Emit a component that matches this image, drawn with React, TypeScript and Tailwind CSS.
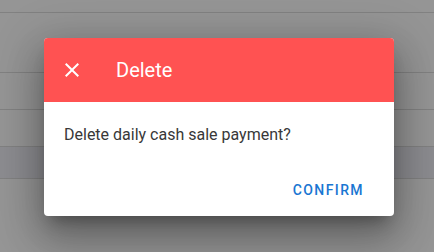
import React from 'react';

const ROWS = [
  { h: 'h-[13px]', bg: '' },
  { h: 'h-[60px]', bg: '' },
  { h: 'h-[37px]', bg: '' },
  { h: 'h-[37px]', bg: '' },
  { h: 'h-[32px]', bg: 'bg-[#8c8c90]' },
];

export default function App() {
  return (
    <div className="relative w-[434px] h-[252px] overflow-hidden bg-[#959595]" style={{ fontFamily: 'Roboto, "Liberation Sans", sans-serif' }}>
      {/* backdrop rows */}
      <div className="flex flex-col">
        {ROWS.map((r, i) => (
          <div key={i} className={`${r.h} ${r.bg} border-b border-[#818181]`} />
        ))}
      </div>

      {/* dialog */}
      <div className="absolute left-[44px] top-[38px] w-[350px] h-[178px] rounded-[4px] overflow-hidden bg-white shadow-[0_11px_15px_-7px_rgba(0,0,0,0.3),0_24px_38px_3px_rgba(0,0,0,0.2),0_9px_46px_8px_rgba(0,0,0,0.18)] flex flex-col">
        <div className="h-16 bg-[#ff5252] flex items-center pl-4 text-white">
          <svg viewBox="0 0 24 24" className="w-6 h-6" fill="currentColor">
            <path d="M19 6.41 17.59 5 12 10.59 6.41 5 5 6.41 10.59 12 5 17.59 6.41 19 12 13.41 17.59 19 19 17.59 13.41 12z" />
          </svg>
          <span className="ml-8 text-[20px] leading-none">Delete</span>
        </div>
        <div className="px-5 pt-[21px] text-[16px] leading-6 text-[#383838]">
          Delete daily cash sale payment?
        </div>
        <div className="mt-auto flex justify-end pr-[22px] pb-2">
          <button className="h-9 px-2 text-[14px] font-medium tracking-[1.4px] text-[#1976d2]">
            CONFIRM
          </button>
        </div>
      </div>
    </div>
  );
}
